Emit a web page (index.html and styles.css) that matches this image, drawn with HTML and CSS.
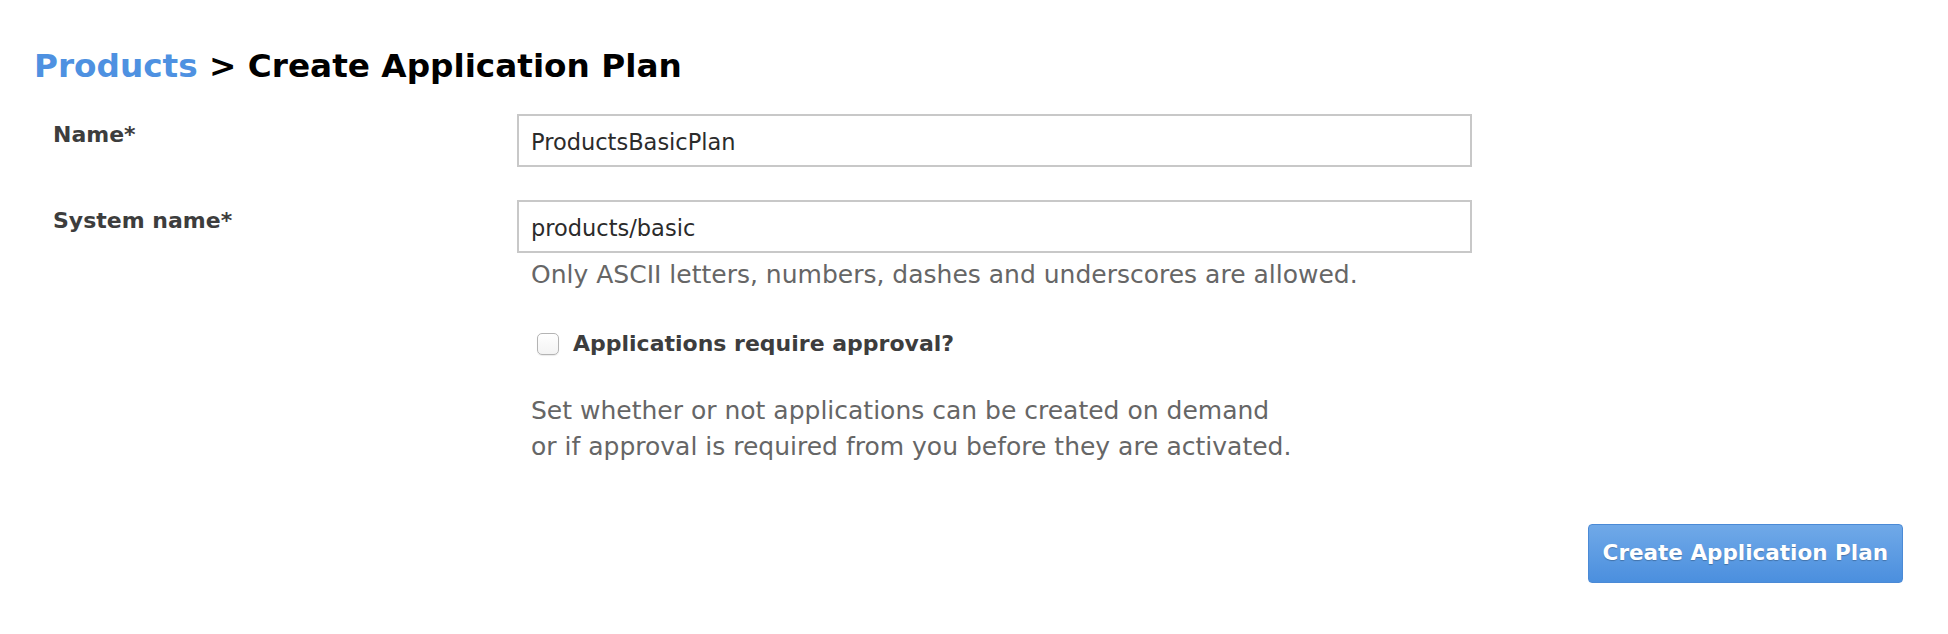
FILE: index.html
```html
<!DOCTYPE html>
<html>
<head>
<meta charset="utf-8">
<link rel="stylesheet" href="styles.css">
</head>
<body>
<div class="page">
  <h1 class="title"><a class="crumb" href="#">Products</a> <span class="sep">&gt;</span> Create Application Plan</h1>
  <form class="form">
    <div class="row">
      <label class="label">Name*</label>
      <div class="field">
        <input class="input" type="text" value="ProductsBasicPlan">
      </div>
    </div>
    <div class="row">
      <label class="label">System name*</label>
      <div class="field">
        <input class="input" type="text" value="products/basic">
        <p class="hint">Only ASCII letters, numbers, dashes and underscores are allowed.</p>
      </div>
    </div>
    <div class="row">
      <div class="label"></div>
      <div class="field">
        <label class="check-row"><input class="checkbox" type="checkbox"><span class="check-label">Applications require approval?</span></label>
        <p class="desc">Set whether or not applications can be created on demand<br>or if approval is required from you before they are activated.</p>
      </div>
    </div>
    <div class="actions">
      <button class="btn" type="button">Create Application Plan</button>
    </div>
  </form>
</div>
</body>
</html>
```

FILE: styles.css
```css
html, body {
  margin: 0;
  padding: 0;
  background: #ffffff;
}

body {
  font-family: "DejaVu Sans", "Open Sans", sans-serif;
  color: #3d3d3d;
}

.page {
  padding: 42px 45px 0 34px;
}

.title {
  margin: 0;
  font-size: 32.7px;
  line-height: 48px;
  font-weight: 700;
  color: #000000;
}

.crumb {
  color: #4e91e1;
  text-decoration: none;
}

.form {
  display: flex;
  flex-direction: column;
  margin-top: 24px;
  padding-left: 19px;
}

.row {
  display: grid;
  grid-template-columns: 464px 955px;
}

.row + .row {
  margin-top: 33px;
}

.row:last-of-type {
  margin-top: 34px;
}

.label {
  padding-top: 5px;
  font-size: 22px;
  line-height: 31px;
  font-weight: 700;
  color: #3d3d3d;
}

.field {
  display: flex;
  flex-direction: column;
}

.input {
  box-sizing: border-box;
  width: 955px;
  height: 53px;
  margin: 0;
  padding: 2px 12px 0;
  border: 2px solid #c8c8c8;
  border-radius: 0;
  font-family: "DejaVu Sans", "Open Sans", sans-serif;
  font-size: 22.5px;
  color: #2b2b2b;
  background: #ffffff;
  outline: none;
}

.hint {
  margin: 4px 0 0 14px;
  font-size: 25px;
  line-height: 36px;
  color: #666666;
}

.check-row {
  display: flex;
  align-items: flex-start;
  margin-left: 20px;
}

.checkbox {
  appearance: none;
  -webkit-appearance: none;
  box-sizing: border-box;
  flex: none;
  width: 22px;
  height: 22px;
  margin: 7px 14px 0 0;
  border: 1px solid #b4b4b4;
  border-radius: 5px;
  background: linear-gradient(#ffffff, #f3f3f3);
  box-shadow: 0 1px 1px rgba(0, 0, 0, 0.08);
}

.check-label {
  font-size: 22px;
  line-height: 36px;
  font-weight: 700;
  color: #3d3d3d;
}

.desc {
  margin: 31px 0 0 14px;
  font-size: 25px;
  line-height: 36px;
  color: #666666;
}

.actions {
  display: flex;
  justify-content: flex-end;
  margin-top: 59px;
}

.btn {
  padding: 11px 14px 13px;
  border: 1px solid #4b8ad6;
  border-radius: 4px;
  background: linear-gradient(#70a9e8, #4b8fde);
  color: #ffffff;
  font-family: "DejaVu Sans", "Open Sans", sans-serif;
  font-size: 21.5px;
  line-height: 33px;
  font-weight: 700;
  text-shadow: 0 1px 1px rgba(0, 0, 0, 0.25);
}
```
